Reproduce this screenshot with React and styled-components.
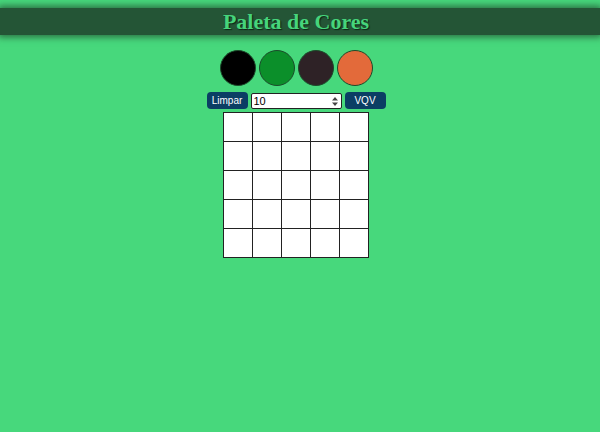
import styled, { createGlobalStyle } from 'styled-components';

const GlobalStyle = createGlobalStyle`
  html, body {
    margin: 0;
    padding: 0;
    background: #47d87c;
    font-family: "Liberation Sans", Arial, sans-serif;
  }
`;

const Page = styled.div`
  min-height: 432px;
  display: flex;
  flex-direction: column;
  align-items: center;
  padding-top: 8px;
`;

const Title = styled.h1`
  align-self: stretch;
  margin: 0;
  padding-right: 8px;
  height: 27px;
  line-height: 28px;
  background: #245536;
  box-shadow: 0 0 7px 2px #2a6a40;
  text-align: center;
  font-family: "Liberation Serif", "Times New Roman", serif;
  font-size: 22px;
  font-weight: bold;
  color: #46d47b;
  text-shadow: 1px 1px 1px #0d2416;
`;

const Main = styled.main`
  display: flex;
  flex-direction: column;
  align-items: center;
  padding-right: 8px;
`;

const Palette = styled.div`
  display: flex;
  gap: 3px;
  margin-top: 15px;
`;

const Color = styled.div`
  width: 34px;
  height: 34px;
  border-radius: 50%;
  border: 1px solid #1c4a2a;
  background: ${({ $color }) => $color};
`;

const Controls = styled.div`
  display: flex;
  align-items: center;
  gap: 3px;
  margin-top: 6px;
`;

const Button = styled.button`
  width: 41px;
  height: 17px;
  padding: 0;
  border: none;
  border-radius: 4px;
  background: #0b3e64;
  color: #fff;
  font-family: "Liberation Sans", Arial, sans-serif;
  font-size: 10px;
`;

const InputWrap = styled.div`
  position: relative;
  display: flex;
`;

const SizeInput = styled.input`
  box-sizing: border-box;
  width: 91px;
  height: 16px;
  padding: 0 2px;
  border: 1px solid #222;
  border-radius: 2px;
  background: #fff;
  font-family: "Liberation Sans", Arial, sans-serif;
  font-size: 11px;
  color: #000;
  -moz-appearance: textfield;

  &::-webkit-inner-spin-button,
  &::-webkit-outer-spin-button {
    -webkit-appearance: none;
    margin: 0;
  }
`;

const Spinner = styled.svg`
  position: absolute;
  right: 4px;
  top: 4px;
  width: 6px;
  height: 9px;
  pointer-events: none;
`;

const Board = styled.div`
  display: flex;
  flex-wrap: wrap;
  width: ${({ $size }) => $size * 29}px;
  margin-top: 3px;
  border-left: 1px solid #222;
  border-top: 1px solid #222;
`;

const Pixel = styled.div`
  width: 28px;
  height: 28px;
  flex: 0 0 28px;
  background: #fff;
  border-right: 1px solid #222;
  border-bottom: 1px solid #222;
`;

const colors = ['#000000', '#0b8f2a', '#2e2226', '#e36a3a'];
const size = 5;

export default function App() {
  return (
    <>
      <GlobalStyle />
      <Page>
        <Title>Paleta de Cores</Title>
        <Main>
          <Palette>
            {colors.map((c) => (
              <Color key={c} $color={c} />
            ))}
          </Palette>
          <Controls>
            <Button>Limpar</Button>
            <InputWrap>
              <SizeInput type="number" defaultValue="10" min="1" />
              <Spinner viewBox="0 0 6 9">
                <path d="M3 0 L6 3.5 H0 Z M3 9 L6 5.5 H0 Z" fill="#444" />
              </Spinner>
            </InputWrap>
            <Button>VQV</Button>
          </Controls>
          <Board $size={size}>
            {Array.from({ length: size * size }).map((_, i) => (
              <Pixel key={i} />
            ))}
          </Board>
        </Main>
      </Page>
    </>
  );
}
